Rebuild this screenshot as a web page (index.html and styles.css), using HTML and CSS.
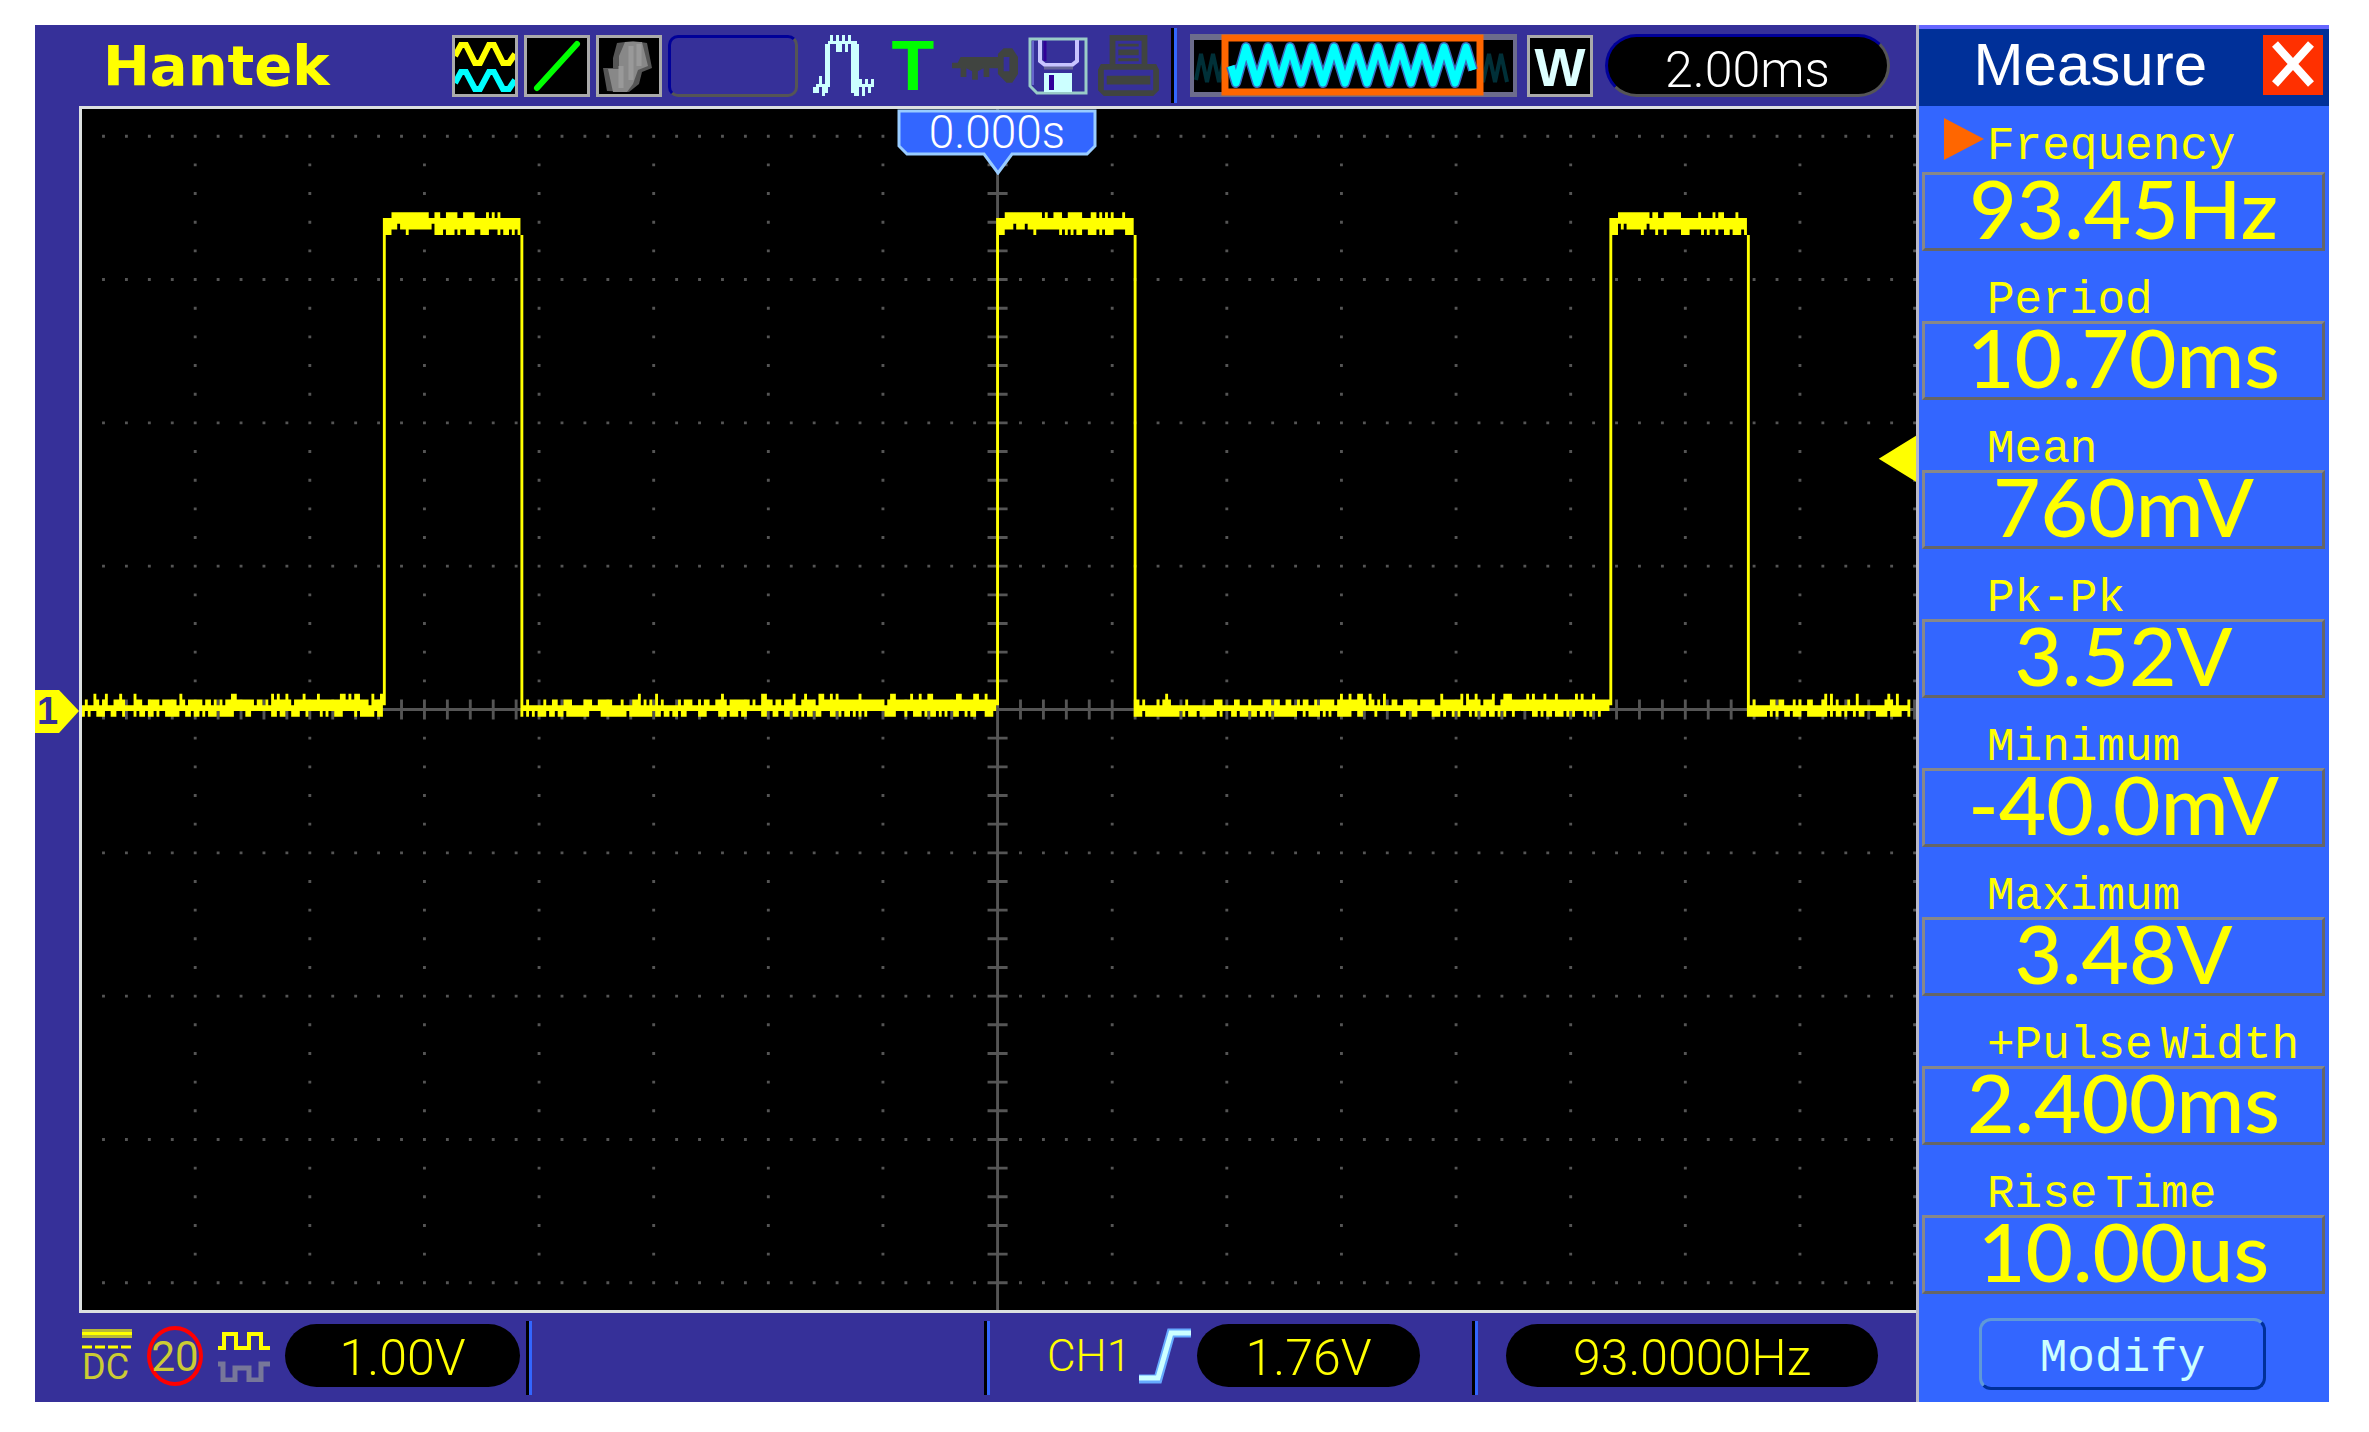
FILE: index.html
```html
<!DOCTYPE html>
<html lang="en">
<head>
  <meta charset="UTF-8">
  <title>Hantek Oscilloscope</title>
  <link rel="stylesheet" href="styles.css">
</head>
<body>
  <div class="device">
    <header class="topbar">
      <span class="brand">Hantek</span>
      <div class="modes">
        <svg class="box" viewBox="0 0 60 56">
          <path d="M0 18L6 7H11L20 25H25L34 7H39L48 25H54L60 16" fill="none" stroke="#ff0" stroke-width="6"/>
          <path d="M0 45L6 34H11L20 51H25L34 34H39L48 51H54L60 42" fill="none" stroke="#0ff" stroke-width="6"/>
        </svg>
        <svg class="box" viewBox="0 0 60 56">
          <path d="M10 50L50 6" stroke="#0f0" stroke-width="6" stroke-linecap="round"/>
        </svg>
        <svg class="box" viewBox="0 0 60 56">
          <path d="M4 30H14V20L18 5L34 3L48 5L53 30L43 34L40 46L30 54L8 53Z" fill="#555"/>
          <path d="M9 31H20V18L26 4H43L49 28L39 32L34 46L28 54H14Z" fill="#888"/>
          <path d="M22 28V50M32 8V42M40 6V28" stroke="#999" stroke-width="5"/>
        </svg>
        <div class="slot"></div>
      </div>
      <div class="status">
        <svg width="61" height="61" viewBox="0 0 21 21" shape-rendering="crispEdges">
          <path fill="#cff" d="M6 0h1v2h1V0h1v2h1V0h1v2h1V0h1v2h2v1h1v14h5v1h-1v2h-1v-2h-1v3h-1v-3h-1v3h-2v-1h-1V3h-1v3h-1V3h-1v3h-1V3H9v3H8V3H6v15H5v2H4v1H3v-3H2v2H0v-2h1v-1h1v-3h1v3h1V3h1V2h1zM16 15h1v2h-1zM18 15h1v2h-1zM20 15h1v3h-1z"/>
        </svg>
        <span class="trig">T</span>
        <svg width="66" height="35" viewBox="0 0 23 12">
          <path fill="#404440" fill-rule="evenodd" d="M3 3H16V2L18 0H21L23 3V9L21 12H19L16 9V7H13V10H11V7L9 8V11H7V8L5 7V10H3V7H0V5H2ZM18 3V8H20V3Z"/>
        </svg>
        <svg width="60" height="58" viewBox="0 0 60 58">
          <path d="M2 2H58V56H9L2 49Z" fill="none" stroke="#99ccc8" stroke-width="3"/>
          <path d="M5 4V48" stroke="#6666cc" stroke-width="2"/>
          <path d="M12 3V24L17 28H44L49 24V3" fill="none" stroke="#c8c4ff" stroke-width="4"/>
          <path d="M17 4V24" stroke="#300099" stroke-width="3"/>
          <path d="M16 31H45" stroke="#666699" stroke-width="3"/>
          <path d="M16 36H44V55H16Z" fill="#cff"/>
          <path d="M21 38H26V53H21Z" fill="#300099"/>
        </svg>
        <svg width="61" height="61" viewBox="0 0 21 21">
          <path fill="#404440" fill-rule="evenodd" d="M4 0H17V10H20L21 12V19L19 21H2L0 19V12L1 10H4ZM6 2V10H15V2ZM2 12V19H19V12Z"/>
          <path fill="#404440" d="M7 3H14V4H7ZM7 5H14V7H7ZM7 8H14V9H7ZM3 14H18V17H3Z"/>
        </svg>
      </div>
      <svg class="minimap" viewBox="0 0 327 63">
        <rect width="327" height="63" fill="#6c6c8c"/>
        <rect x="4" y="6" width="319" height="52" fill="#000"/>
        <path id="miniBack" fill="none" stroke="#003038" stroke-width="4"/>
        <rect x="35" y="4" width="255" height="54" fill="#000" stroke="#f60" stroke-width="7"/>
        <path id="miniShade" fill="none" stroke="#3a6ac0" stroke-width="10" stroke-linejoin="round"/>
        <path id="miniWave" fill="none" stroke="#0ff" stroke-width="7" stroke-linejoin="round"/>
      </svg>
      <span class="box window">W</span>
      <output class="pill timebase">2.00ms</output>
    </header>

    <main class="screen">
      <div class="rail">
        <div class="ch-marker">
          <svg viewBox="0 0 44 43"><path d="M0 0H24L44 21L24 43H0Z" fill="#ff0"/></svg>
          <span>1</span>
        </div>
      </div>
      <div class="scope">
        <svg class="plot" viewBox="0 0 640 419" preserveAspectRatio="none">
          <path id="grid" fill="#555"/>
          <path id="trace" fill="#ff0"/>
          <path d="M640 114V130L627 122Z" fill="#ff0"/>
        </svg>
        <div class="time-flag">
          <svg viewBox="0 0 200 66">
            <path d="M2 2H198V37L190 45H115L101 64L87 45H10L2 37Z" fill="#36f" stroke="#9cf" stroke-width="3"/>
          </svg>
          <span>0.000s</span>
        </div>
      </div>
    </main>

    <footer class="bottombar">
      <section class="channel">
        <span class="coupling">
          <svg width="50" height="22" viewBox="0 0 50 22">
            <path d="M0 1H50V10H0Z" fill="#b8b838"/>
            <path d="M0 4H50V7H0Z" fill="#ff0"/>
            <path d="M0 19H50" stroke="#ff0" stroke-width="3" stroke-dasharray="10 3"/>
          </svg>
          DC
        </span>
        <span class="bandwidth">20</span>
        <svg width="52" height="52" viewBox="0 0 52 52">
          <path d="M0 34H5V50H17V38H31V50H43V34H52" fill="none" stroke="#77779a" stroke-width="5"/>
          <path d="M0 18H6V4H18V18H31V4H43V18H52" fill="none" stroke="#ff0" stroke-width="4"/>
        </svg>
        <output class="pill">1.00V</output>
      </section>
      <section></section>
      <section class="trigger">
        <span>CH1</span>
        <svg width="52" height="56" viewBox="0 0 52 56">
          <path d="M0 51H19L32 5H52" fill="none" stroke="#6af" stroke-width="9"/>
          <path d="M0 50H19L32 5H52" fill="none" stroke="#cff" stroke-width="5"/>
        </svg>
        <output class="pill">1.76V</output>
      </section>
      <section class="counter">
        <output class="pill">93.0000Hz</output>
      </section>
    </footer>

    <aside class="panel">
      <div class="panel-head">
        <h1>Measure</h1>
        <button class="close" type="button" aria-label="Close">
          <svg viewBox="0 0 60 60"><path d="M12 9L48 49M48 9L12 49" stroke="#fff" stroke-width="8"/></svg>
        </button>
      </div>
      <dl class="measures">
        <dt class="active">Frequency</dt>
        <dd>93.45Hz</dd>
        <dt>Period</dt>
        <dd>10.70ms</dd>
        <dt>Mean</dt>
        <dd>760mV</dd>
        <dt>Pk-Pk</dt>
        <dd>3.52V</dd>
        <dt>Minimum</dt>
        <dd>-40.0mV</dd>
        <dt>Maximum</dt>
        <dd>3.48V</dd>
        <dt>+Pulse<small> </small>Width</dt>
        <dd>2.400ms</dd>
        <dt>Rise<small> </small>Time</dt>
        <dd>10.00us</dd>
      </dl>
      <button class="modify" type="button">Modify</button>
    </aside>
  </div>
  <script src="scope.js"></script>
</body>
</html>
```
FILE: styles.css
```css
* {
  box-sizing: border-box;
}
body {
  margin: 0;
  padding: 25px 40px 30px 35px;
  background: #fff;
  font-family: Roboto, "Liberation Sans", sans-serif;
  font-weight: 300;
}
svg {
  display: block;
  flex: none;
}
.device {
  display: grid;
  grid-template-columns: 1fr 413px;
  grid-template-rows: 81px 1fr 89px;
  min-height: calc(100vh - 55px);
  background: #363099;
}

/* top bar */
.topbar {
  display: flex;
  align-items: center;
  padding: 0 26px 0 68px;
}
.brand {
  width: 349px;
  font: bold 56px "DejaVu Sans", sans-serif;
  line-height: 60px;
  color: #ff0;
}
.modes {
  display: flex;
  gap: 6px;
}
.box {
  width: 66px;
  height: 62px;
  background: #000;
  border: 3px solid #aaa;
}
.slot {
  width: 130px;
  height: 62px;
  border: 3px solid;
  border-color: #009 #555 #555 #009;
  border-radius: 10px;
}
.status {
  display: flex;
  align-items: center;
  gap: 10px;
  margin-left: 15px;
}
.trig {
  width: 58px;
  text-align: center;
  font: bold 70px "Liberation Sans", sans-serif;
  line-height: 58px;
  color: #0f0;
}
.minimap {
  width: 346px;
  height: 75px;
  margin-left: 12px;
  padding: 6px 0 6px 16px;
  border-left: 3px solid #000;
  box-shadow: inset 3px 0 #36f;
}
.window {
  flex: none;
  margin: 0 12px 0 10px;
  text-align: center;
  font: bold 54px "Liberation Sans", sans-serif;
  line-height: 58px;
  color: #dff;
}
.pill {
  flex: 1;
  height: 63px;
  border-radius: 32px;
  background: #000;
  color: #ff0;
  font-size: 50px;
  line-height: 68px;
  text-align: center;
}
.timebase {
  border: 3px solid;
  border-color: #009 #555 #555 #009;
  line-height: 66px;
  color: #fff;
}

/* plot */
.screen {
  grid-row: 2;
  display: flex;
}
.rail {
  width: 44px;
  position: relative;
}
.ch-marker {
  position: absolute;
  top: 50%;
  left: 0;
  width: 44px;
  height: 43px;
  margin-top: -20px;
}
.ch-marker span {
  position: absolute;
  top: 0;
  left: 2px;
  font: bold 38px "Liberation Sans", sans-serif;
  line-height: 43px;
  color: #363099;
}
.scope {
  flex: 1;
  position: relative;
  background: #000;
  border: 3px solid #dce0e0;
  border-right: none;
}
.plot {
  position: absolute;
  width: 100%;
  height: 100%;
}
.time-flag {
  position: absolute;
  top: 0;
  left: 50%;
  width: 200px;
  margin-left: -102px;
  color: #fff;
  font-size: 46px;
  line-height: 46px;
  text-align: center;
}
.time-flag span {
  position: absolute;
  top: 0;
  left: 0;
  width: 100%;
}

/* bottom bar */
.bottombar {
  grid-row: 3;
  display: grid;
  grid-template-columns: 491fr 458fr 488fr 444fr;
  padding: 8px 0 7px;
}
.bottombar section {
  display: flex;
  align-items: center;
  padding-bottom: 5px;
}
.bottombar section + section {
  border-left: 3px solid #000;
  box-shadow: inset 3px 0 #36f;
}
.bottombar .channel {
  gap: 15px;
  padding-left: 47px;
  padding-right: 6px;
}
.coupling {
  width: 50px;
  font-size: 36px;
  line-height: 34px;
  font-weight: 400;
  color: #cc3;
}
.bandwidth {
  width: 56px;
  height: 60px;
  border: 4px solid #f00;
  border-radius: 50%;
  font-size: 42px;
  line-height: 54px;
  font-weight: 400;
  text-align: center;
  color: #cc3;
}
.bottombar .trigger {
  padding-left: 60px;
  padding-right: 52px;
}
.trigger span {
  width: 92px;
  font-size: 44px;
  color: #ff0;
}
.trigger .pill {
  margin-left: 6px;
}
.bottombar .counter {
  padding-left: 31px;
  padding-right: 38px;
}

/* measure panel */
.panel {
  grid-column: 2;
  grid-row: 1 / 4;
  border-left: 3px solid #b8b8c8;
  background: #36f;
}
.panel-head {
  display: flex;
  align-items: center;
  justify-content: flex-end;
  gap: 56px;
  height: 81px;
  padding-right: 6px;
  border-top: 4px solid #66f;
  background: #003099;
}
.panel-head h1 {
  margin: 0;
  font: 60px "Liberation Sans", sans-serif;
  line-height: 66px;
  padding-bottom: 6px;
  color: #fff;
}
.close {
  width: 60px;
  height: 60px;
  margin-bottom: 6px;
  padding: 0;
  border: none;
  background: #ff3000;
}
.measures {
  margin: 0;
  padding: 0 4px 0 3px;
}
.measures dt {
  height: 70px;
  padding: 18px 0 0 65px;
  font: 46px "Liberation Mono", monospace;
  line-height: 64px;
  color: #ff0;
  white-space: pre;
}
.measures dt small {
  font-size: 14px;
}
.measures dt.active {
  position: relative;
  height: 66px;
  padding-top: 9px;
}
.active::before {
  content: "";
  position: absolute;
  left: 22px;
  top: 12px;
  border: solid transparent;
  border-width: 21px 0 21px 40px;
  border-left-color: #f60;
}
.measures dd {
  height: 79px;
  margin: 0;
  border: 3px solid;
  border-color: #888 #666 #666 #888;
  font: 500 82px Lato, sans-serif;
  line-height: 64px;
  text-align: center;
  color: #ff0;
}
.modify {
  display: block;
  width: 287px;
  height: 72px;
  margin: 24px 0 0 60px;
  padding: 10px 0 0;
  border: 3px solid;
  border-color: #5f99d8 #003099 #003099 #5f99d8;
  border-radius: 12px;
  background: none;
  font: 46px "Liberation Mono", monospace;
  color: #cff;
}
```
FILE: scope.js
```js
const rect = (x, y, w, h) => `M${x} ${y}h${w}v${h}h${-w}z`;

// graticule: 16 x 8 divisions round the centre point
const CX = 319, CY = 209;
let grid = rect(CX, 0, 1, 419) + rect(0, CY, 640, 1);
for (let j = -4; j <= 4; j++) {
  for (let i = -39; i <= 40; i++) {
    grid += j === 0 ? rect(CX + i * 8, CY - 3, 1, 7) : rect(CX + i * 8, CY + j * 50, 1, 1);
  }
}
for (let j = -20; j <= 20; j++) {
  grid += rect(CX - 3, CY + j * 10, 7, 1) + rect(639, CY + j * 10, 1, 1);
  for (let i = -7; i <= 7; i++) {
    grid += rect(CX + i * 40, CY + j * 10, 1, 1);
  }
}
document.getElementById("grid").setAttribute("d", grid);

// pulse train with quantised noise
let seed = 7;
function rnd() {
  seed = (seed * 1103515245 + 12345) % 2147483648;
  return seed / 2147483648;
}
const PERIOD = 214, WIDTH = 48, RISE = 105;
let trace = "";
for (let x = 0; x < 638; x++) {
  const phase = (x - RISE + PERIOD) % PERIOD;
  let top, bottom;
  if (phase < WIDTH) {
    const p = phase / WIDTH;
    top = rnd() < 1.1 - p && phase > 2 ? 36 : 38;
    bottom = rnd() < p * 0.8 || phase < 3 ? 44 : rnd() < 0.4 - p ? 40 : 42;
  } else {
    const p = (phase - WIDTH) / (PERIOD - WIDTH);
    const up = rnd();
    top = up < p * 0.3 ? 204 : up < 0.35 + p * 0.65 ? 206 : 208;
    bottom = rnd() < 0.75 - p * 0.4 ? 212 : 210;
  }
  trace += rect(x, top, 1, bottom - top);
}
for (let r = RISE; r < 640; r += PERIOD) {
  trace += rect(r, 40, 1, 168) + rect(r + WIDTH, 44, 1, 165);
}
document.getElementById("trace").setAttribute("d", trace);

// record overview in the top bar
let wave = "M41 32L46 49";
for (let i = 0; i < 11; i++) {
  wave += `L${56 + i * 22} 13L${67 + i * 22} 49`;
}
wave = wave.replace(/L287 49$/, "L283 36");
document.getElementById("miniWave").setAttribute("d", wave);
document.getElementById("miniShade").setAttribute("d", wave);

let back = "M6 46";
for (let i = 6; i < 318; i += 12) {
  back += `L${i + 5} 20L${i + 11} 48`;
}
document.getElementById("miniBack").setAttribute("d", back);
```
